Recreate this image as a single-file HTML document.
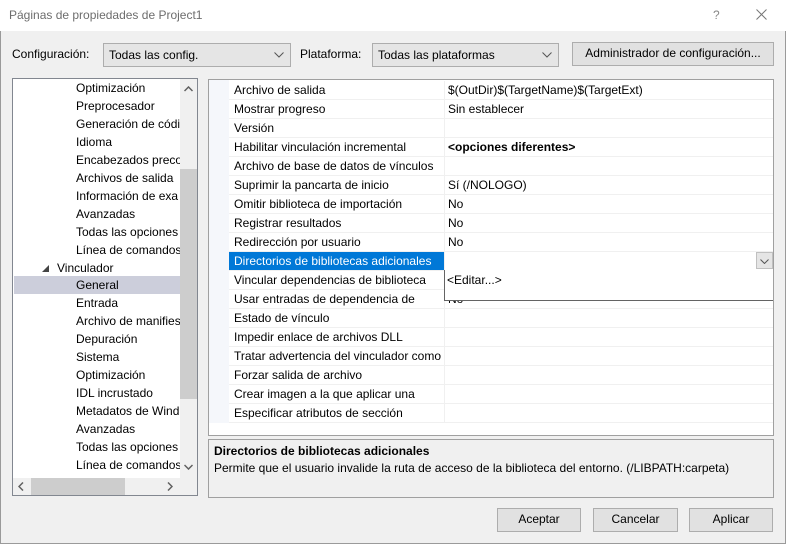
<!DOCTYPE html>
<html><head><meta charset="utf-8"><style>
*{box-sizing:border-box;margin:0;padding:0}
body{width:786px;height:544px;background:#f0f0f0;font-family:"Liberation Sans",sans-serif;font-size:12px;color:#000;position:relative;overflow:hidden}
.a{position:absolute;white-space:nowrap}
#win{position:absolute;left:0;top:0;width:786px;height:544px;border:1px solid #9a9a9a;border-top:1px solid #c8c8c8}
#title{position:absolute;left:0;top:0;width:786px;height:31px;background:#fff}
.combo{position:absolute;height:24px;background:#e5e5e5;border:1px solid #adadad;padding:4px 5px;line-height:14px}
.combo svg{position:absolute;right:6px;top:8px}
.btn{position:absolute;background:#e1e1e1;border:1px solid #adadad;text-align:center;line-height:21px}
#tree{position:absolute;left:12px;top:78px;width:186px;height:418px;border:1px solid #828790;background:#fff;overflow:hidden}
.ti{position:absolute;left:63px;height:18px;line-height:18px}
#grid{position:absolute;left:208px;top:79px;width:566px;height:357px;border:1px solid #a0a0a0;background:#fff;overflow:hidden}
.row{position:absolute;left:20px;width:545px;height:19px;border-bottom:1px solid #f0f0f0}
.n{position:absolute;left:0;top:0;width:216px;height:18px;line-height:18px;padding-left:5px;overflow:hidden;border-right:1px solid #f0f0f0}
.v{position:absolute;left:216px;top:0;height:18px;line-height:18px;padding-left:3px}
</style></head><body>
<div id="win"></div>
<div id="title"></div>
<div class="a" style="left:9px;top:8px;color:#6d6d6d;font-size:12px">Páginas de propiedades de Project1</div>
<div class="a" style="left:713px;top:8px;color:#888">?</div>
<svg class="a" style="left:756px;top:9px" width="11" height="11"><path d="M0.5 0.5L10.5 10.5M10.5 0.5L0.5 10.5" stroke="#777" stroke-width="1"/></svg>

<div class="a" style="left:12px;top:47px">Configuración:</div>
<div class="combo" style="left:103px;top:43px;width:188px">Todas las config.<svg width="10" height="6"><path d="M0.5 0.5L5 5L9.5 0.5" stroke="#555" fill="none"/></svg></div>
<div class="a" style="left:300px;top:47px">Plataforma:</div>
<div class="combo" style="left:372px;top:43px;width:187px">Todas las plataformas<svg width="10" height="6"><path d="M0.5 0.5L5 5L9.5 0.5" stroke="#555" fill="none"/></svg></div>
<div class="btn" style="left:572px;top:42px;width:202px;height:24px">Administrador de configuración...</div>

<div id="tree">
<div class="ti" style="top:0">Optimización</div>
<div class="ti" style="top:18px">Preprocesador</div>
<div class="ti" style="top:36px">Generación de códi</div>
<div class="ti" style="top:54px">Idioma</div>
<div class="ti" style="top:72px">Encabezados precoı</div>
<div class="ti" style="top:90px">Archivos de salida</div>
<div class="ti" style="top:108px">Información de exa</div>
<div class="ti" style="top:126px">Avanzadas</div>
<div class="ti" style="top:144px">Todas las opciones</div>
<div class="ti" style="top:162px">Línea de comandos</div>
<svg class="a" style="left:29px;top:186px" width="7" height="7"><path d="M7 0L7 7L0 7Z" fill="#444"/></svg>
<div class="ti" style="top:180px;left:44px">Vinculador</div>
<div class="a" style="left:1px;top:197px;width:166px;height:18px;background:#cccedb"></div>
<div class="ti" style="top:197px">General</div>
<div class="ti" style="top:215px">Entrada</div>
<div class="ti" style="top:233px">Archivo de manifies</div>
<div class="ti" style="top:251px">Depuración</div>
<div class="ti" style="top:269px">Sistema</div>
<div class="ti" style="top:287px">Optimización</div>
<div class="ti" style="top:305px">IDL incrustado</div>
<div class="ti" style="top:323px">Metadatos de Wind</div>
<div class="ti" style="top:341px">Avanzadas</div>
<div class="ti" style="top:359px">Todas las opciones</div>
<div class="ti" style="top:377px">Línea de comandos</div>
<div class="a" style="left:167px;top:0;width:17px;height:399px;background:#f0f0f0"></div>
<div class="a" style="left:167px;top:90px;width:17px;height:230px;background:#cdcdcd"></div>
<svg class="a" style="left:171px;top:7px" width="9" height="6"><path d="M0.5 5L4.5 1L8.5 5" stroke="#606060" stroke-width="1.5" fill="none"/></svg>
<svg class="a" style="left:171px;top:385px" width="9" height="6"><path d="M0.5 1L4.5 5L8.5 1" stroke="#606060" stroke-width="1.5" fill="none"/></svg>
<div class="a" style="left:0;top:399px;width:184px;height:17px;background:#f0f0f0"></div>
<div class="a" style="left:18px;top:399px;width:94px;height:17px;background:#cdcdcd"></div>
<svg class="a" style="left:5px;top:403px" width="6" height="9"><path d="M5 0.5L1 4.5L5 8.5" stroke="#606060" stroke-width="1.5" fill="none"/></svg>
<svg class="a" style="left:154px;top:403px" width="6" height="9"><path d="M1 0.5L5 4.5L1 8.5" stroke="#606060" stroke-width="1.5" fill="none"/></svg>
</div>

<div id="grid">
<div class="a" style="left:0;top:0;width:20px;height:343px;background:#f5f7fb"></div>
<div class="row" style="top:1px"><div class="n">Archivo de salida</div><div class="v">$(OutDir)$(TargetName)$(TargetExt)</div></div>
<div class="row" style="top:20px"><div class="n">Mostrar progreso</div><div class="v">Sin establecer</div></div>
<div class="row" style="top:39px"><div class="n">Versión</div><div class="v"></div></div>
<div class="row" style="top:58px"><div class="n">Habilitar vinculación incremental</div><div class="v" style="font-weight:bold">&lt;opciones diferentes&gt;</div></div>
<div class="row" style="top:77px"><div class="n">Archivo de base de datos de vínculos in</div><div class="v"></div></div>
<div class="row" style="top:96px"><div class="n">Suprimir la pancarta de inicio</div><div class="v">Sí (/NOLOGO)</div></div>
<div class="row" style="top:115px"><div class="n">Omitir biblioteca de importación</div><div class="v">No</div></div>
<div class="row" style="top:134px"><div class="n">Registrar resultados</div><div class="v">No</div></div>
<div class="row" style="top:153px"><div class="n">Redirección por usuario</div><div class="v">No</div></div>
<div class="row" style="top:172px"><div class="n" style="background:#0078d7;color:#fff">Directorios de bibliotecas adicionales</div><div class="v"></div></div>
<div class="row" style="top:191px"><div class="n">Vincular dependencias de biblioteca</div><div class="v"></div></div>
<div class="row" style="top:210px"><div class="n">Usar entradas de dependencia de bibliot</div><div class="v">No</div></div>
<div class="row" style="top:229px"><div class="n">Estado de vínculo</div><div class="v"></div></div>
<div class="row" style="top:248px"><div class="n">Impedir enlace de archivos DLL</div><div class="v"></div></div>
<div class="row" style="top:267px"><div class="n">Tratar advertencia del vinculador como</div><div class="v"></div></div>
<div class="row" style="top:286px"><div class="n">Forzar salida de archivo</div><div class="v"></div></div>
<div class="row" style="top:305px"><div class="n">Crear imagen a la que aplicar una revisió</div><div class="v"></div></div>
<div class="row" style="top:324px"><div class="n">Especificar atributos de sección</div><div class="v"></div></div>
<div class="a" style="left:547px;top:172px;width:17px;height:17px;background:#e5e5e5;border:1px solid #c0c0c0"></div>
<svg class="a" style="left:551px;top:179px" width="9" height="5"><path d="M0.5 0.5L4.5 4.5L8.5 0.5" stroke="#555" fill="none"/></svg>
<div class="a" style="left:235px;top:190px;width:330px;height:31px;background:#fff;border:1px solid #646464;border-top:none;padding:3px 2px;line-height:14px">&lt;Editar...&gt;</div>
</div>

<div class="a" style="left:208px;top:439px;width:566px;height:59px;border:1px solid #a0a0a0;background:#f0f0f0">
<div class="a" style="left:5px;top:4px;font-weight:bold">Directorios de bibliotecas adicionales</div>
<div class="a" style="left:5px;top:21px">Permite que el usuario invalide la ruta de acceso de la biblioteca del entorno. (/LIBPATH:carpeta)</div>
</div>

<div class="btn" style="left:497px;top:508px;width:84px;height:24px">Aceptar</div>
<div class="btn" style="left:593px;top:508px;width:85px;height:24px">Cancelar</div>
<div class="btn" style="left:689px;top:508px;width:84px;height:24px">Aplicar</div>
</body></html>
